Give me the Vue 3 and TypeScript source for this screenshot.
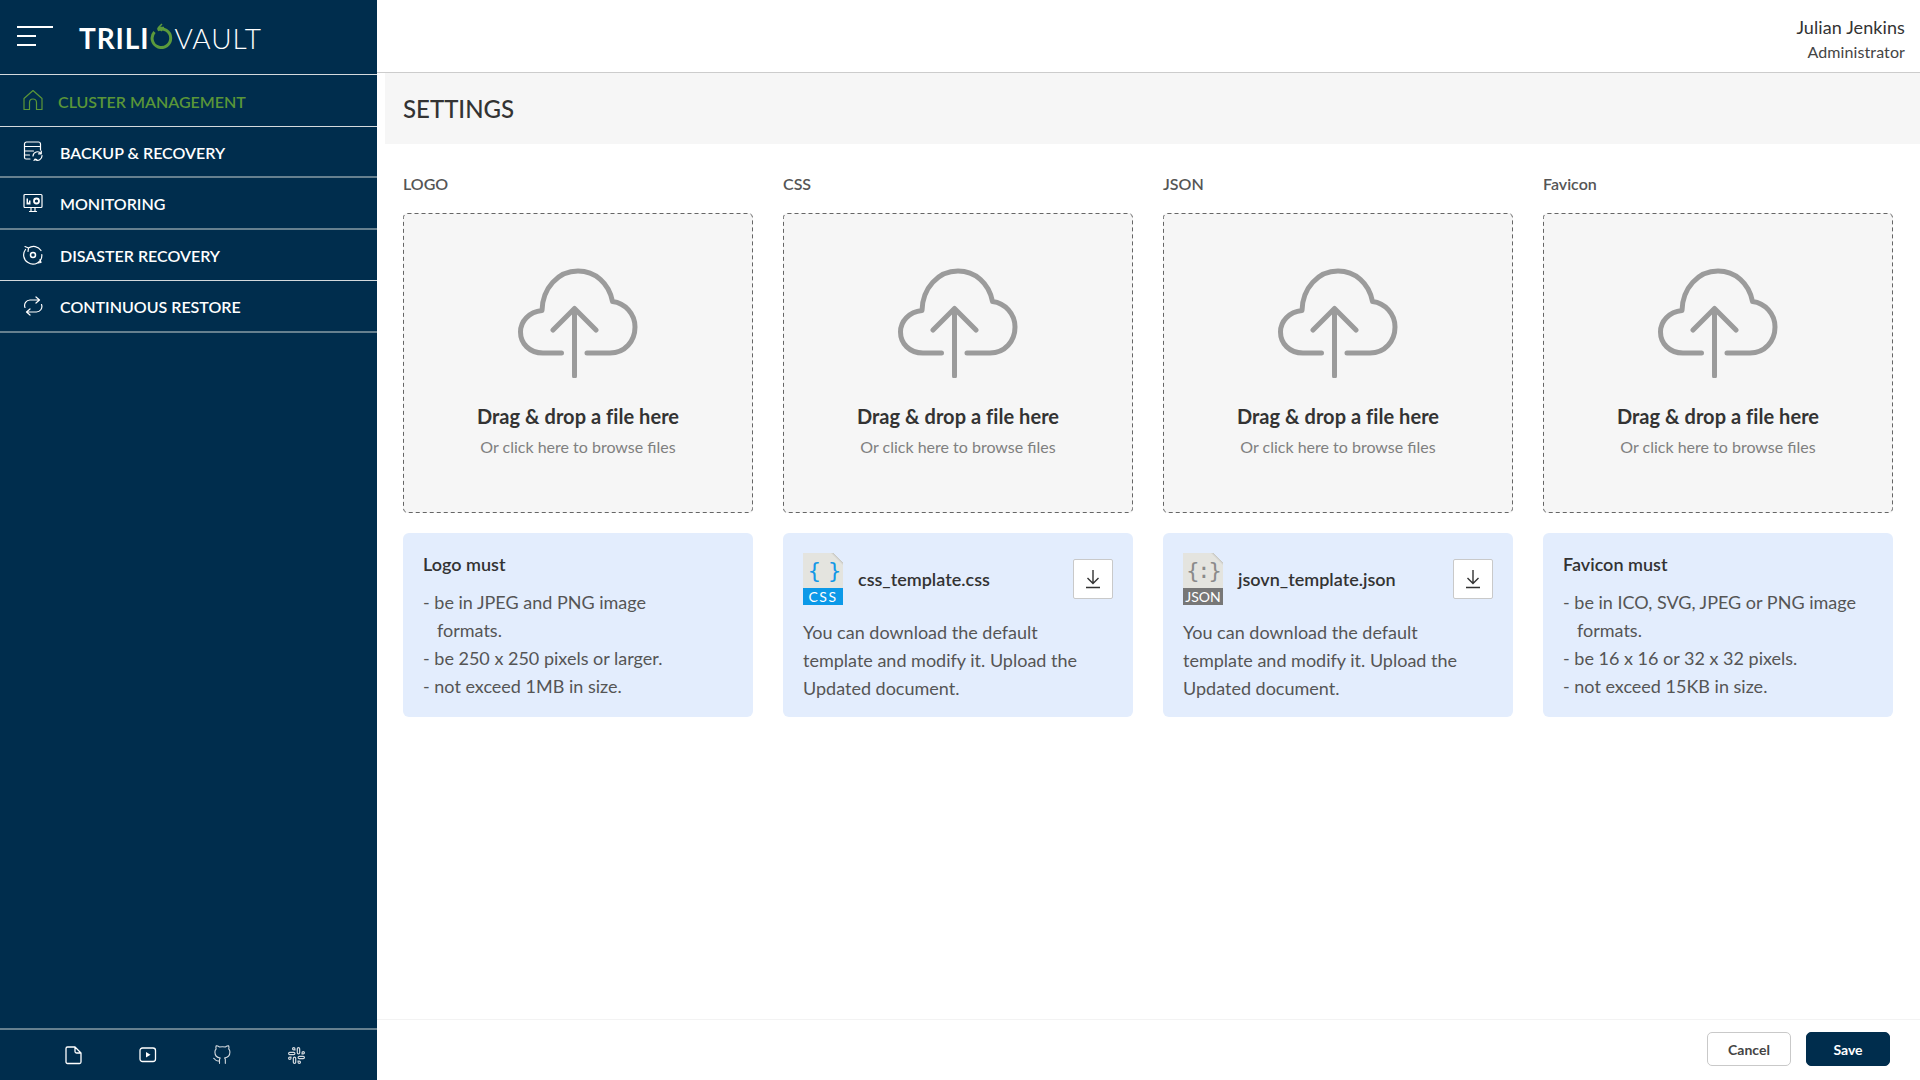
<template>
  <div class="app">
    <aside class="sidebar">
      <div class="brand">
        <button class="burger" aria-label="Menu"><span class="b1"></span><span class="b2"></span><span class="b2"></span></button>
        <div class="logo">
          <span class="logo-bold">TRILI</span>
          <svg class="logo-ring" width="23" height="26" viewBox="0 0 23 26" fill="none">
            <path d="M7.500 6.800A9.300 9.300 0 1 1 4.500 9" stroke="#5b9a3c" stroke-width="3" />
            <path d="M12 1 8.500 4.500 12 8M9 4.500h5" stroke="#5b9a3c" stroke-width="1.500" />
          </svg>
          <span class="logo-light">VAULT</span>
        </div>
      </div>
      <nav class="nav">
        <a v-for="item in navItems" :key="item.label" class="nav-item" :class="[{ active: item.active }, item.line]">
          <svg class="nav-icon" width="20" height="20" viewBox="0 0 20 20" fill="none" stroke="currentColor" stroke-width="1.2" stroke-linecap="round" stroke-linejoin="round" v-html="item.icon"></svg>
          <span>{{ item.label }}</span>
        </a>
      </nav>
      <div class="side-foot">
        <svg width="18" height="20" viewBox="0 0 18 20" fill="none" stroke="#fff" stroke-width="1.300" stroke-linejoin="round">
          <path d="M2.500 2h7.500l6 6v9a1.500 1.500 0 0 1-1.500 1.500h-12A1.500 1.500 0 0 1 1 17V3.500A1.500 1.500 0 0 1 2.500 2ZM10 2v4.500A1.500 1.500 0 0 0 11.500 8H16" />
        </svg>
        <svg width="18" height="16" viewBox="0 0 18 16" fill="none" stroke="#fff" stroke-width="1.300">
          <rect x="1" y="1" width="15.500" height="13.500" rx="2.500" />
          <path d="M7 5v5.500l4.500-2.700Z" fill="#fff" stroke="none" />
        </svg>
        <svg width="20" height="20" viewBox="0 0 24 24" fill="none" stroke="#d5dbe0" stroke-width="1.300" stroke-linejoin="round" stroke-linecap="round">
          <path d="M9 19c-5 1.500-5-2.500-7-3m14 6v-3.870a3.370 3.370 0 0 0-.94-2.610c3.140-.35 6.440-1.540 6.440-7A5.440 5.440 0 0 0 20 4.770 5.070 5.070 0 0 0 19.910 1S18.730.65 16 2.480a13.380 13.380 0 0 0-7 0C6.270.65 5.090 1 5.090 1A5.070 5.070 0 0 0 5 4.770a5.440 5.440 0 0 0-1.500 3.780c0 5.420 3.300 6.610 6.440 7A3.370 3.370 0 0 0 9 18.130V22" />
        </svg>
        <svg width="19" height="19" viewBox="0 0 24 24" fill="none" stroke="#d5dbe0" stroke-width="1.500">
          <path d="M14.500 10c-.83 0-1.500-.67-1.500-1.500v-5c0-.83.67-1.500 1.500-1.500s1.500.67 1.500 1.500v5c0 .83-.67 1.500-1.500 1.500z" />
          <path d="M20.500 10H19V8.500c0-.83.67-1.500 1.500-1.500s1.500.67 1.500 1.500-.67 1.500-1.500 1.500z" />
          <path d="M9.500 14c.83 0 1.500.67 1.500 1.500v5c0 .83-.67 1.500-1.500 1.500S8 21.330 8 20.500v-5c0-.83.67-1.500 1.500-1.500z" />
          <path d="M3.500 14H5v1.500c0 .83-.67 1.500-1.500 1.500S2 16.330 2 15.500 2.670 14 3.500 14z" />
          <path d="M14 14.500c0-.83.67-1.500 1.500-1.500h5c.83 0 1.500.67 1.500 1.500s-.67 1.500-1.500 1.500h-5c-.83 0-1.500-.67-1.500-1.500z" />
          <path d="M15.500 19H14v1.500c0 .83.67 1.500 1.500 1.500s1.500-.67 1.500-1.500-.67-1.500-1.500-1.500z" />
          <path d="M10 9.500C10 8.670 9.330 8 8.500 8h-5C2.670 8 2 8.670 2 9.500S2.670 11 3.500 11h5c.83 0 1.500-.67 1.500-1.500z" />
          <path d="M8.500 5H10V3.500C10 2.670 9.330 2 8.500 2S7 2.670 7 3.500 7.670 5 8.500 5z" />
        </svg>
      </div>
    </aside>

    <main class="main">
      <header class="topbar">
        <div class="user-name">Julian Jenkins</div>
        <div class="user-role">Administrator</div>
      </header>
      <div class="title-band"><h1>SETTINGS</h1></div>

      <section class="columns">
        <div v-for="col in columns" :key="col.label" class="column">
          <div class="col-label">{{ col.label }}</div>
          <div class="dropzone">
            <svg class="dash" width="350" height="300" fill="none" stroke="#666" stroke-dasharray="4 3">
              <rect x=".5" y=".5" width="349" height="299" rx="4" />
            </svg>
            <svg class="cloud" width="122" height="110" viewBox="0 0 122 110" fill="none" stroke="#9b9b9b" stroke-width="5" stroke-linecap="round" stroke-linejoin="round">
              <path d="M44.500 85H26C12 85 3.500 75 3.500 64c0-11 8.500-20 21.500-21.500C25.500 20 41 3 61 3c17 0 31 12 34.500 30.500C108 35 118 46 118 59c0 14-10 26-25 26H70" />
              <path d="M57.500 108V43M36 62l21.500-21.500L79 62" />
            </svg>
            <div class="drop-title">Drag &amp; drop a file here</div>
            <div class="drop-sub">Or click here to browse files</div>
          </div>

          <div v-if="col.rules" class="info">
            <div class="info-title">{{ col.title }}</div>
            <ul class="rules">
              <li v-for="rule in col.rules" :key="rule">- {{ rule }}</li>
            </ul>
          </div>
          <div v-else class="info">
            <div class="file-row">
              <div class="file-icon" :class="col.kind">
                <div class="file-top">{{ col.glyph }}</div>
                <div class="file-tag">{{ col.tag }}</div>
              </div>
              <div class="file-name">{{ col.file }}</div>
              <button class="download" aria-label="Download">
                <svg width="16" height="20" viewBox="0 0 16 20" fill="none" stroke="#333" stroke-width="1.400">
                  <path d="M8 1v13M2.500 9 8 14.500 13.500 9M1 18.500h14" />
                </svg>
              </button>
            </div>
            <p class="file-text">You can download the default template and modify it. Upload the Updated document.</p>
          </div>
        </div>
      </section>

      <footer class="footer">
        <button class="btn cancel">Cancel</button>
        <button class="btn save">Save</button>
      </footer>
    </main>
  </div>
</template>

<script setup lang="ts">
interface NavItem {
  label: string
  icon: string
  active?: boolean
  line: 'thin' | 'thick'
}

interface Column {
  label: string
  title?: string
  rules?: string[]
  kind?: string
  glyph?: string
  tag?: string
  file?: string
}

const navItems: NavItem[] = [
  {
    label: 'CLUSTER MANAGEMENT',
    active: true,
    line: 'thin',
    icon: '<path d="M1 8.500 10 .5l9 8V19.500H13.500V12.500a3.500 3.500 0 0 0-7 0v7H1Z"/>',
  },
  {
    label: 'BACKUP & RECOVERY',
    line: 'thick',
    icon: '<path d="M17.500 9V3a2 2 0 0 0-2-2h-12a2 2 0 0 0-2 2v13.500A1.500 1.500 0 0 0 3 18h4M1.500 5.500h16M1.500 10h9M1.500 14h5M10 15a4.500 4.500 0 0 1 8-2.500M19 14.500a4.500 4.500 0 0 1-7 4M18.300 10v2.800H15.500M11 19.500l1-1.500 1.700.5" />',
  },
  {
    label: 'MONITORING',
    line: 'thick',
    icon: '<rect x="1" y="1.500" width="18" height="13" rx="1"/><path d="M6.500 18.500h7M8 14.500v4M12 14.500v4"/><path d="M3.500 11.500V5.500h1.500v4h1V7.500h1.500v4Z" fill="currentColor" stroke="none"/><circle cx="13.500" cy="8" r="2.500" stroke-width="1.800"/>',
  },
  {
    label: 'DISASTER RECOVERY',
    line: 'thin',
    icon: '<path d="M5.500 3A8.800 8.800 0 0 1 18 5.500M18.800 9.500A8.800 8.800 0 0 1 5 17.500 8.800 8.800 0 0 1 2.500 4.500M2 1.500 5.500 3 5 6.500M15 18l3-.5-1-3"/><circle cx="10" cy="10" r="2.500" stroke-width="1.500"/>',
  },
  {
    label: 'CONTINUOUS RESTORE',
    line: 'thick',
    icon: '<path d="M13 1l3.500 3L13 7M16 4H7a5.500 5.500 0 0 0-5 7.500M7 19l-3.500-3L7 13M4 16h9a5.500 5.500 0 0 0 5.500-7.500"/>',
  },
]

const columns: Column[] = [
  {
    label: 'LOGO',
    title: 'Logo must',
    rules: ['be in JPEG and PNG image\nformats.', 'be 250 x 250 pixels or larger.', 'not exceed 1MB in size.'],
  },
  { label: 'CSS', kind: 'css', glyph: '{ }', tag: 'CSS', file: 'css_template.css' },
  { label: 'JSON', kind: 'json', glyph: '{:}', tag: 'JSON', file: 'jsovn_template.json' },
  {
    label: 'Favicon',
    title: 'Favicon must',
    rules: ['be in ICO, SVG, JPEG or PNG image\nformats.', 'be 16 x 16 or 32 x 32 pixels.', 'not exceed 15KB in size.'],
  },
]
</script>

<style>
html,
body {
  margin: 0;
  background: #fff;
}
</style>

<style scoped>
* {
  box-sizing: border-box;
}

.app {
  display: flex;
  width: 1920px;
  height: 1080px;
  overflow: hidden;
  font-family: Lato, "Liberation Sans", sans-serif;
  color: #333;
}

.sidebar {
  width: 377px;
  flex-shrink: 0;
  display: flex;
  flex-direction: column;
  background: #002d4d;
  color: #fff;
}

.brand {
  height: 75px;
  display: flex;
  align-items: center;
  padding: 0 0 0 17px;
  gap: 25px;
  border-bottom: 1px solid #d4d9dd;
}

.burger {
  display: flex;
  flex-direction: column;
  gap: 7px;
  width: 37px;
  padding: 0;
  border: 0;
  background: none;
  margin-top: -2px;
}

.burger span {
  display: block;
  height: 2px;
  background: #fff;
}

.b1 {
  width: 36px;
}

.b2 {
  width: 19px;
}

.logo {
  display: flex;
  align-items: center;
  font-size: 28px;
  line-height: 34px;
  letter-spacing: 0.9px;
  margin-top: 1px;
}

.logo-bold {
  font-weight: 700;
}

.logo-ring {
  margin: -4px 1px 0 1px;
}

.logo-light {
  font-weight: 300;
}

.nav {
  display: flex;
  flex-direction: column;
  flex: 1;
}

.nav-item {
  height: 51.500px;
  display: flex;
  align-items: center;
  padding: 2px 0 0 23px;
  gap: 17px;
  font-size: 16px;
  font-weight: 600;
  color: #fff;
}

.nav-item.thin {
  border-bottom: 1px solid #d4d9dd;
}

.nav-item.thick {
  border-bottom: 2px solid #66808f;
}

.nav-item.active {
  color: #5a9638;
  gap: 15px;
}

.nav-icon {
  flex-shrink: 0;
  margin-top: -2px;
}

.side-foot {
  height: 52px;
  border-top: 2px solid #66808f;
  display: grid;
  grid-template-columns: repeat(4, 74px);
  justify-items: center;
  align-items: center;
  padding-left: 37px;
}

.main {
  flex: 1;
  min-width: 0;
  display: flex;
  flex-direction: column;
}

.topbar {
  height: 73px;
  padding: 16px 15px 0 0;
  text-align: right;
  border-bottom: 1px solid #ccc;
}

.user-name {
  font-size: 18px;
  line-height: 22px;
  letter-spacing: 0.1px;
  color: #333;
}

.user-role {
  font-size: 16px;
  line-height: 20px;
  margin-top: 4px;
  letter-spacing: 0.1px;
  color: #444;
}

.title-band {
  margin-left: 8px;
  height: 71px;
  display: flex;
  align-items: center;
  padding-left: 18px;
  background: #f6f6f6;
}

.title-band h1 {
  margin: 0;
  font-size: 24px;
  font-weight: 500;
  color: #333;
}

.columns {
  display: grid;
  grid-template-columns: repeat(4, 350px);
  gap: 30px;
  padding: 30px 0 0 26px;
  flex: 1;
}

.col-label {
  font-size: 16px;
  font-weight: 600;
  line-height: 20px;
  color: #555;
  margin-bottom: 19px;
}

.dropzone {
  position: relative;
  height: 300px;
  display: flex;
  flex-direction: column;
  align-items: center;
  background: #f6f6f6;
  border-radius: 4px;
  padding-top: 55px;
}

.dash {
  position: absolute;
  top: 0;
  left: 0;
}

.cloud {
  display: block;
}

.drop-title {
  margin-top: 26px;
  font-size: 20px;
  line-height: 24px;
  font-weight: 700;
  letter-spacing: 0.05px;
  color: #333;
}

.drop-sub {
  margin-top: 9px;
  font-size: 16px;
  line-height: 20px;
  color: #808080;
}

.info {
  margin-top: 20px;
  height: 184px;
  padding: 20px;
  background: #e3edfd;
  border-radius: 6px;
}

.info-title {
  font-size: 18px;
  font-weight: 600;
  line-height: 22px;
  color: #333;
}

.rules {
  list-style: none;
  margin: 13px 0 0;
  padding: 0;
  font-size: 18px;
  line-height: 28px;
  color: #555;
  white-space: pre-line;
}

.rules li {
  padding-left: 14px;
  text-indent: -14px;
}

.file-row {
  display: flex;
  align-items: center;
}

.file-icon {
  width: 40px;
  height: 52px;
  flex-shrink: 0;
  display: flex;
  flex-direction: column;
}

.file-top {
  flex: 1;
  background: linear-gradient(225deg, #e3edfd 7px, #c9c9c5 7px, #e4e4df 9px);
  font-family: "DejaVu Sans Mono", monospace;
  font-size: 22px;
  line-height: 36px;
  text-align: center;
  white-space: nowrap;
  overflow: hidden;
}

.file-icon.css .file-top {
  color: #1398e6;
  letter-spacing: -3px;
}

.file-icon.json .file-top {
  color: #8a8a8a;
  letter-spacing: -2px;
}

.file-tag {
  height: 17px;
  font-size: 14px;
  line-height: 17px;
  text-align: center;
  color: #fff;
}

.file-icon.css .file-tag {
  background: #0c99e8;
  letter-spacing: 1.500px;
}

.file-icon.json .file-tag {
  background: #777;
}

.file-name {
  flex: 1;
  margin-left: 15px;
  font-size: 18px;
  font-weight: 600;
  color: #333;
}

.download {
  width: 40px;
  height: 40px;
  padding: 0;
  display: flex;
  align-items: center;
  justify-content: center;
  background: #fff;
  border: 1px solid #c9c9c9;
  border-radius: 2px;
}

.file-text {
  margin: 13px 0 0;
  max-width: 290px;
  font-size: 18px;
  line-height: 28px;
  color: #555;
}

.footer {
  height: 61px;
  flex-shrink: 0;
  display: flex;
  justify-content: flex-end;
  align-items: center;
  gap: 15px;
  padding: 0 30px 2px 0;
  border-top: 1px solid #f3f3f3;
}

.btn {
  width: 84px;
  height: 34px;
  padding: 0;
  border-radius: 5px;
  font-family: inherit;
  font-size: 14px;
  font-weight: 700;
}

.cancel {
  background: #fff;
  border: 1px solid #c9c9c9;
  color: #444;
}

.save {
  background: #002d4d;
  border: 1px solid #002d4d;
  color: #fff;
}
</style>
